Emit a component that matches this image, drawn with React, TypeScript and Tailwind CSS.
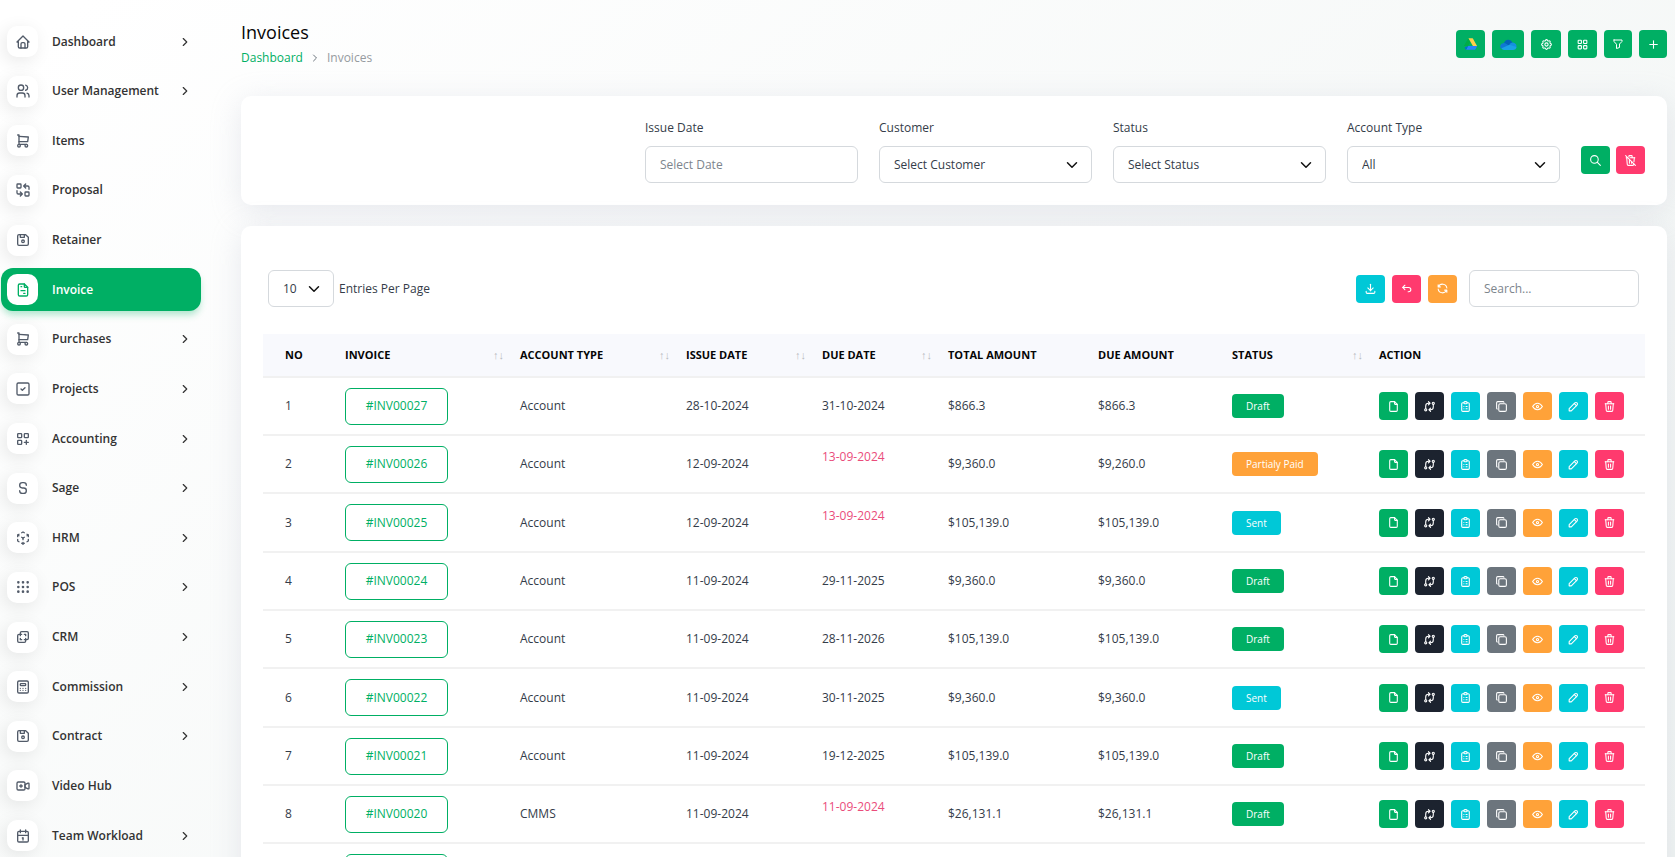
import type { ReactNode, SelectHTMLAttributes } from 'react'
import type { IconType } from 'react-icons'
import {
  TbArrowBackUp,
  TbCalculator,
  TbCalendar,
  TbChevronDown,
  TbChevronRight,
  TbClipboardList,
  TbCopy,
  TbCube3dSphere,
  TbDeviceFloppy,
  TbDownload,
  TbExchange,
  TbEye,
  TbFile,
  TbFileInvoice,
  TbFilter,
  TbGridDots,
  TbHome,
  TbLayersDifference,
  TbLayoutGrid,
  TbLayoutGridAdd,
  TbLetterS,
  TbPencil,
  TbPlus,
  TbRefresh,
  TbReplace,
  TbSearch,
  TbSettings,
  TbShoppingCart,
  TbSquareCheck,
  TbTrash,
  TbTrashOff,
  TbUsers,
  TbVideoPlus,
} from 'react-icons/tb'

interface NavItem {
  label: string
  icon: IconType
  expandable?: boolean
  active?: boolean
}

const navItems: NavItem[] = [
  { label: 'Dashboard', icon: TbHome, expandable: true },
  { label: 'User Management', icon: TbUsers, expandable: true },
  { label: 'Items', icon: TbShoppingCart },
  { label: 'Proposal', icon: TbReplace },
  { label: 'Retainer', icon: TbDeviceFloppy },
  { label: 'Invoice', icon: TbFileInvoice, active: true },
  { label: 'Purchases', icon: TbShoppingCart, expandable: true },
  { label: 'Projects', icon: TbSquareCheck, expandable: true },
  { label: 'Accounting', icon: TbLayoutGridAdd, expandable: true },
  { label: 'Sage', icon: TbLetterS, expandable: true },
  { label: 'HRM', icon: TbCube3dSphere, expandable: true },
  { label: 'POS', icon: TbGridDots, expandable: true },
  { label: 'CRM', icon: TbLayersDifference, expandable: true },
  { label: 'Commission', icon: TbCalculator, expandable: true },
  { label: 'Contract', icon: TbDeviceFloppy, expandable: true },
  { label: 'Video Hub', icon: TbVideoPlus },
  { label: 'Team Workload', icon: TbCalendar, expandable: true },
]

type Status = 'Draft' | 'Partialy Paid' | 'Sent'

interface Invoice {
  id: string
  type: string
  issued: string
  due: string
  overdue?: boolean
  total: string
  dueAmount: string
  status: Status
}

const invoices: Invoice[] = [
  { id: '#INV00027', type: 'Account', issued: '28-10-2024', due: '31-10-2024', total: '$866.3', dueAmount: '$866.3', status: 'Draft' },
  { id: '#INV00026', type: 'Account', issued: '12-09-2024', due: '13-09-2024', overdue: true, total: '$9,360.0', dueAmount: '$9,260.0', status: 'Partialy Paid' },
  { id: '#INV00025', type: 'Account', issued: '12-09-2024', due: '13-09-2024', overdue: true, total: '$105,139.0', dueAmount: '$105,139.0', status: 'Sent' },
  { id: '#INV00024', type: 'Account', issued: '11-09-2024', due: '29-11-2025', total: '$9,360.0', dueAmount: '$9,360.0', status: 'Draft' },
  { id: '#INV00023', type: 'Account', issued: '11-09-2024', due: '28-11-2026', total: '$105,139.0', dueAmount: '$105,139.0', status: 'Draft' },
  { id: '#INV00022', type: 'Account', issued: '11-09-2024', due: '30-11-2025', total: '$9,360.0', dueAmount: '$9,360.0', status: 'Sent' },
  { id: '#INV00021', type: 'Account', issued: '11-09-2024', due: '19-12-2025', total: '$105,139.0', dueAmount: '$105,139.0', status: 'Draft' },
  { id: '#INV00020', type: 'CMMS', issued: '11-09-2024', due: '11-09-2024', overdue: true, total: '$26,131.1', dueAmount: '$26,131.1', status: 'Draft' },
  { id: '#INV00019', type: 'Account', issued: '11-09-2024', due: '19-12-2025', total: '$9,360.0', dueAmount: '$9,360.0', status: 'Draft' },
]

const statusColors: Record<Status, string> = {
  Draft: 'bg-[#00af64]',
  'Partialy Paid': 'bg-[#ffa239]',
  Sent: 'bg-[#00c8d7]',
}

const columns = [
  { label: 'No', width: 'w-[74px]' },
  { label: 'Invoice', width: 'w-[175px]', sortable: true },
  { label: 'Account Type', width: 'w-[166px]', sortable: true },
  { label: 'Issue Date', width: 'w-[136px]', sortable: true },
  { label: 'Due Date', width: 'w-[126px]', sortable: true },
  { label: 'Total Amount', width: 'w-[150px]' },
  { label: 'Due Amount', width: 'w-[134px]' },
  { label: 'Status', width: 'w-[147px]', sortable: true },
  { label: 'Action', width: 'w-[274px]' },
]

const rowActions = [
  { label: 'Open file', icon: TbFile, color: 'bg-[#00af64]' },
  { label: 'Convert', icon: TbExchange, color: 'bg-[#1c232f]' },
  { label: 'Details', icon: TbClipboardList, color: 'bg-[#00c8d7]' },
  { label: 'Duplicate', icon: TbCopy, color: 'bg-[#6c757d]' },
  { label: 'View', icon: TbEye, color: 'bg-[#ffa239]' },
  { label: 'Edit', icon: TbPencil, color: 'bg-[#00c8d7]' },
  { label: 'Delete', icon: TbTrash, color: 'bg-[#ff3a6e]' },
]

interface IconButtonProps {
  label: string
  color: string
  width?: string
  children: ReactNode
}

function IconButton({ label, color, width = 'w-[29px]', children }: IconButtonProps) {
  return (
    <button
      type="button"
      aria-label={label}
      className={`flex h-7 shrink-0 items-center justify-center rounded text-white ${width} ${color}`}
    >
      {children}
    </button>
  )
}

function Select({ className = '', children, ...props }: SelectHTMLAttributes<HTMLSelectElement>) {
  return (
    <div className={`grid items-center ${className}`}>
      <select
        {...props}
        className="col-start-1 row-start-1 h-[37px] w-full appearance-none rounded-md border border-[#d5d9dd] bg-white px-[14px] text-[#343c49]"
      >
        {children}
      </select>
      <TbChevronDown
        size={18}
        className="pointer-events-none col-start-1 row-start-1 mr-[11px] justify-self-end text-[#111]"
      />
    </div>
  )
}

function DriveLogo() {
  return (
    <svg width="13" height="12" viewBox="0 0 87.3 78" aria-hidden="true">
      <path d="m43.65 25-13.75-23.8c-1.35.8-2.5 1.9-3.3 3.3l-25.4 44a9 9 0 0 0 -1.2 4.5h27.500z" fill="#00ac47" />
      <path d="m27.500 53h59.800c0 1.550-.4 3.100-1.200 4.500l-9.250 16c-.9 1.600-1.950 2.500-3.300 3.300-1.350.75-2.900 1.200-4.500 1.200h-50.800c-1.600 0-3.150-.4-4.500-1.200z" fill="#2684fc" />
      <path d="m27.500 53-13.750 23.800c-1.350-.8-2.500-1.900-3.300-3.300l-6-11z" fill="#0066da" />
      <path d="m73.4 26.500-12.700-22c-.8-1.400-1.950-2.500-3.300-3.300h-27.500l29.900 51.800h27.450c0-1.550-.4-3.100-1.200-4.500z" fill="#ffd04b" />
    </svg>
  )
}

function OneDriveLogo() {
  return (
    <svg width="17" height="11" viewBox="0 0 34 22" aria-hidden="true">
      <path d="M8 8a9 9 0 0 1 17-1l-5 8-13-7z" fill="#0364b8" />
      <path d="M7.500 8c2 0 3.500.6 4.800 1.400L21 15 4 20A7.500 6.500 0 0 1 7.500 8z" fill="#0f78d4" />
      <path d="M25 7a7.500 7.500 0 0 1 7.500 10L20 14l-1-4c2-2 4-3 6-3z" fill="#1490df" />
      <path d="M3 18.500 19 11.500 33 16c-.7 3.500-3 6-7 6H8c-2.300 0-4-1.400-5-3.500z" fill="#1ba1e6" />
    </svg>
  )
}

function Sidebar() {
  return (
    <nav className="flex h-full w-[203px] shrink-0 flex-col justify-between pt-5 pl-px font-semibold">
      {navItems.map(({ label, icon: Icon, expandable, active }) => (
        <a
          key={label}
          href="#"
          className={`flex h-[43px] w-[200px] shrink-0 items-center rounded-xl pr-[9px] pl-1.5 ${
            active ? 'bg-[#00af64] text-white shadow-[0_5px_7px_-1px_rgba(0,175,100,0.3)]' : 'text-[#333]'
          }`}
        >
          <span
            className={`mr-[14px] flex h-[31px] w-[31px] items-center justify-center rounded-[10px] bg-white ${
              active ? 'text-[#00af64]' : 'text-[#525b69] shadow-[-3px_4px_18px_rgba(0,0,0,0.09)]'
            }`}
          >
            <Icon size={16} />
          </span>
          {label}
          {expandable && <TbChevronRight size={14} className="ml-auto" />}
        </a>
      ))}
    </nav>
  )
}

function PageHeader() {
  return (
    <header className="flex items-start justify-between">
      <div>
        <h1 className="text-lg leading-6 font-medium text-[#060606]">Invoices</h1>
        <div className="mt-1 flex items-center gap-1.5 leading-5">
          <a href="#" className="text-[#00af64]">Dashboard</a>
          <TbChevronRight size={12} className="text-[#6c757d]" />
          <span className="text-[#969ba0]">Invoices</span>
        </div>
      </div>
      <div className="mt-[10px] flex gap-[7px]">
        <IconButton label="Google Drive" color="bg-[#00af64]">
          <DriveLogo />
        </IconButton>
        <IconButton label="OneDrive" color="bg-[#00af64]" width="w-8">
          <OneDriveLogo />
        </IconButton>
        <IconButton label="Settings" color="bg-[#00af64]" width="w-[30px]">
          <TbSettings size={13} />
        </IconButton>
        <IconButton label="Grid view" color="bg-[#00af64]">
          <TbLayoutGrid size={13} />
        </IconButton>
        <IconButton label="Filter" color="bg-[#00af64]" width="w-7">
          <TbFilter size={12} />
        </IconButton>
        <IconButton label="Create" color="bg-[#00af64]" width="w-7">
          <TbPlus size={13} />
        </IconButton>
      </div>
    </header>
  )
}

function Field({ id, label, children }: { id: string; label: string; children: ReactNode }) {
  return (
    <div className="w-[213px]">
      <label htmlFor={id} className="mb-2 block leading-5">{label}</label>
      {children}
    </div>
  )
}

function Filters() {
  return (
    <section className="mt-7 flex justify-end gap-[21px] rounded-[10px] bg-white p-[22px] shadow-[0_6px_30px_rgba(182,186,203,0.3)]">
      <Field id="issue-date" label="Issue Date">
        <input
          id="issue-date"
          placeholder="Select Date"
          className="h-[37px] w-full rounded-md border border-[#d5d9dd] px-[14px] placeholder:text-[#7d858d]"
        />
      </Field>
      <Field id="customer" label="Customer">
        <Select id="customer">
          <option>Select Customer</option>
        </Select>
      </Field>
      <Field id="status" label="Status">
        <Select id="status">
          <option>Select Status</option>
        </Select>
      </Field>
      <Field id="account-type" label="Account Type">
        <Select id="account-type">
          <option>All</option>
        </Select>
      </Field>
      <div className="mt-7 flex gap-1.5">
        <IconButton label="Apply" color="bg-[#00af64]">
          <TbSearch size={13} />
        </IconButton>
        <IconButton label="Reset" color="bg-[#ff3a6e]">
          <TbTrashOff size={13} />
        </IconButton>
      </div>
    </section>
  )
}

function Toolbar() {
  return (
    <div className="mb-[27px] flex items-center justify-between pr-1.5 pl-[5px]">
      <div className="flex items-center gap-[5px]">
        <Select id="per-page" className="w-[66px]">
          <option>10</option>
        </Select>
        <label htmlFor="per-page">Entries Per Page</label>
      </div>
      <div className="flex items-center gap-[7px]">
        <IconButton label="Export" color="bg-[#00c8d7]">
          <TbDownload size={13} />
        </IconButton>
        <IconButton label="Undo" color="bg-[#ff3a6e]">
          <TbArrowBackUp size={13} />
        </IconButton>
        <IconButton label="Reload" color="bg-[#ffa239]">
          <TbRefresh size={13} />
        </IconButton>
        <input
          type="search"
          aria-label="Search"
          placeholder="Search..."
          className="ml-[5px] h-[37px] w-[170px] rounded-md border border-[#d5d9dd] px-[14px] placeholder:text-[#7d858d]"
        />
      </div>
    </div>
  )
}

function InvoiceTable() {
  return (
    <table className="w-full table-fixed text-left">
      <thead>
        <tr className="h-[43px] border-b-2 border-[#f1f1f1] bg-[#f8f9fd]">
          {columns.map((col) => (
            <th key={col.label} className={`px-2 text-[11px] font-bold text-[#060606] uppercase first:pl-[22px] ${col.width}`}>
              <span className="flex items-center justify-between">
                {col.label}
                {col.sortable && <span className="leading-4 font-normal text-[#b9bcc0]">↑↓</span>}
              </span>
            </th>
          ))}
        </tr>
      </thead>
      <tbody>
        {invoices.map((inv, i) => (
          <tr key={inv.id} className="h-[58px] border-b-2 border-[#f1f1f1] nth-[3n]:h-[59px]">
            <td className="pr-2 pl-[22px]">{i + 1}</td>
            <td className="px-2">
              <a
                href="#"
                className="flex h-[37px] w-[103px] items-center justify-center rounded-md border border-[#00af64] text-[#00af64]"
              >
                {inv.id}
              </a>
            </td>
            <td className="px-2">{inv.type}</td>
            <td className="px-2">{inv.issued}</td>
            <td className="px-2">
              {inv.overdue ? <p className="mb-[14px] text-[#ea4c7b]">{inv.due}</p> : inv.due}
            </td>
            <td className="px-2">{inv.total}</td>
            <td className="px-2">{inv.dueAmount}</td>
            <td className="px-2">
              <span
                className={`inline-flex h-6 items-center rounded px-[14px] align-middle text-[10px] text-white ${statusColors[inv.status]}`}
              >
                {inv.status}
              </span>
            </td>
            <td className="px-2">
              <div className="flex gap-[7px]">
                {rowActions.map(({ label, icon: Icon, color }) => (
                  <IconButton key={label} label={label} color={color}>
                    <Icon size={13} />
                  </IconButton>
                ))}
              </div>
            </td>
          </tr>
        ))}
      </tbody>
    </table>
  )
}

export default function App() {
  return (
    <div className="flex h-screen overflow-hidden bg-[linear-gradient(141.55deg,#ffffff_3%,#f0f4f3_100%)] font-['Open_Sans',sans-serif] text-xs leading-5 text-[#343c49]">
      <Sidebar />
      <main className="min-w-0 flex-1 pt-5 pr-2 pl-[38px]">
        <PageHeader />
        <Filters />
        <section className="mt-[21px] rounded-[10px] bg-white px-[22px] pt-11 pb-6 shadow-[0_6px_30px_rgba(182,186,203,0.3)]">
          <Toolbar />
          <InvoiceTable />
        </section>
      </main>
    </div>
  )
}
